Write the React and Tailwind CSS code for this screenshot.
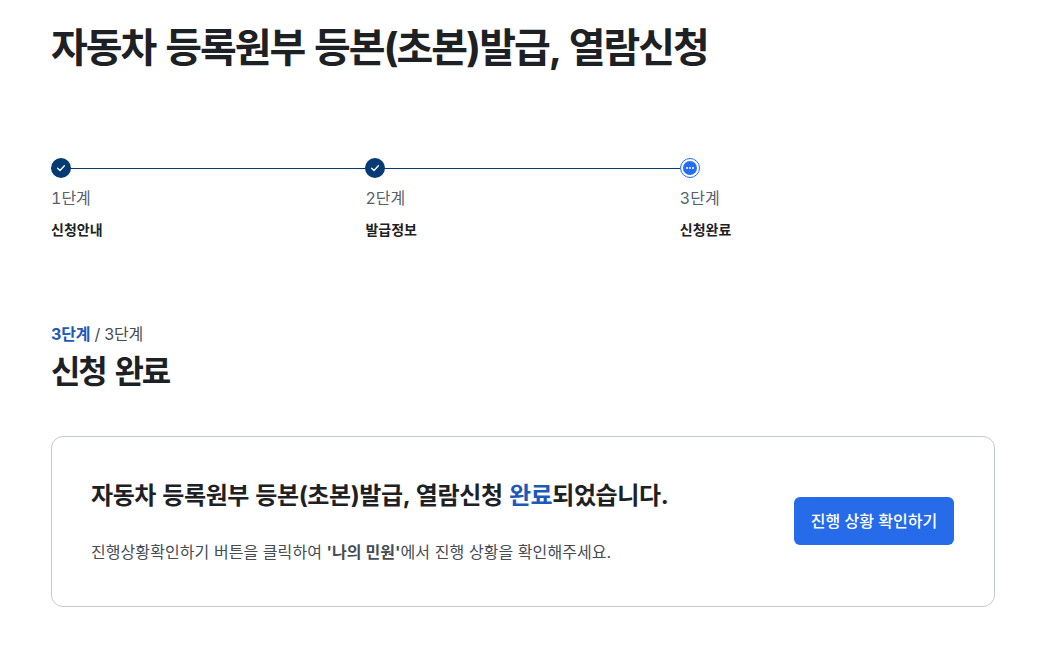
const FONT = 'Inter, "Noto Sans CJK KR", sans-serif';

const STEPS = [
  { no: '1단계', name: '신청안내', state: 'done' },
  { no: '2단계', name: '발급정보', state: 'done' },
  { no: '3단계', name: '신청완료', state: 'current' },
];

function StepDot({ state }) {
  if (state === 'done') {
    return (
      <span className="relative z-10 flex h-5 w-5 items-center justify-center rounded-full bg-[#063a74]">
        <svg width="12" height="12" viewBox="0 0 12 12" fill="none">
          <path d="M2.6 6.2 5 8.5l4.4-4.8" stroke="#fff" strokeWidth="1.3" strokeLinecap="round" strokeLinejoin="round" />
        </svg>
      </span>
    );
  }
  return (
    <span className="relative z-10 flex h-5 w-5 items-center justify-center rounded-full border border-[#256ef4] bg-white">
      <span className="flex h-3.5 w-3.5 items-center justify-center gap-px rounded-full bg-[#256ef4]">
        <span className="h-0.5 w-0.5 rounded-full bg-white" />
        <span className="h-0.5 w-0.5 rounded-full bg-white" />
        <span className="h-0.5 w-0.5 rounded-full bg-white" />
      </span>
    </span>
  );
}

export default function App() {
  return (
    <div className="min-h-screen bg-white px-[51px] pt-[22px] text-[#1e2124]" style={{ fontFamily: FONT }}>
      <h1 className="h-[52px] text-[40px] leading-[52px] font-bold tracking-[-2.05px] [word-spacing:2.5px]">
        자동차 등록원부 등본(초본)발급, 열람신청
      </h1>

      {/* Steps */}
      <div className="mt-[84px] flex">
        {STEPS.map((s, i) => (
          <div key={s.no} className="relative w-[314.4px]">
            {i < 2 && <span className="absolute left-0 right-0 top-[9.5px] h-px bg-[#063a74]" />}
            <StepDot state={s.state} />
            <p className="mt-[8px] text-[16px] leading-6 tabular-nums text-[#58616a]">{s.no}</p>
            <p className="mt-[10px] text-[14px] leading-5 font-bold">{s.name}</p>
          </div>
        ))}
      </div>

      {/* Heading */}
      <p className="mt-[83px] text-[16px] leading-[22px] tracking-[-0.2px] text-[#464c53]">
        <span className="font-bold text-[#1d59b8]">3단계</span> / 3단계
      </p>
      <h2 className="mt-[7px] text-[32px] leading-[40px] font-bold tracking-[-2.3px] [word-spacing:4px]">신청 완료</h2>

      {/* Result card */}
      <div className="mt-[44px] flex h-[171px] w-[944px] items-center justify-between rounded-xl border border-[#c6c9cc] pl-[39px] pr-10">
        <div className="pb-0.5">
          <p className="text-[24px] leading-9 font-bold tracking-[-0.4px] [word-spacing:1px]">
            자동차 등록원부 등본(초본)발급, 열람신청 <span className="text-[#1d59b8]">완료</span>되었습니다.
          </p>
          <p className="mt-[26px] text-[16px] leading-6 tracking-[0.07px] text-[#464c53]">
            진행상황확인하기 버튼을 클릭하여 <strong className="font-bold">'나의 민원'</strong>에서 진행 상황을 확인해주세요.
          </p>
        </div>
        <button className="mb-px h-12 w-40 rounded-md bg-[#256bea] text-[16px] font-medium text-white">진행 상황 확인하기</button>
      </div>
    </div>
  );
}
